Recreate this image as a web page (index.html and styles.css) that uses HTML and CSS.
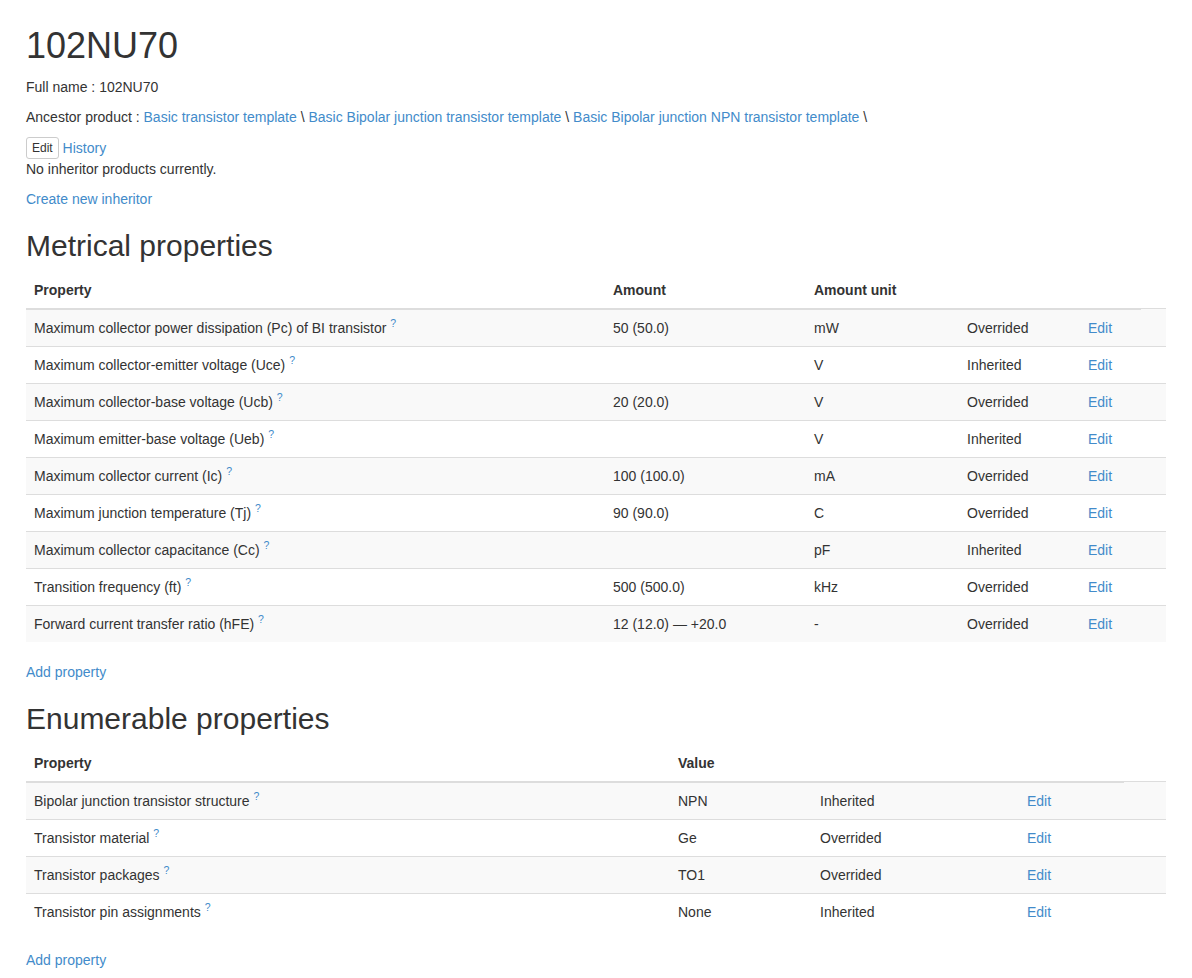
FILE: index.html
```html
<!DOCTYPE html>
<html>
<head>
<meta charset="utf-8">
<title>102NU70</title>
<link rel="stylesheet" href="styles.css">
</head>
<body>
<div class="container">
  <h1 class="title">102NU70</h1>
  <p class="line">Full name : 102NU70</p>
  <p class="line">Ancestor product : <a href="#">Basic transistor template</a> \ <a href="#">Basic Bipolar junction transistor template</a> \ <a href="#">Basic Bipolar junction NPN transistor template</a> \</p>
  <div class="actions"><button class="btn-xs">Edit</button> <a href="#">History</a></div>
  <div class="line-plain">No inheritor products currently.</div>
  <p class="line create"><a href="#">Create new inheritor</a></p>

  <h2 class="section">Metrical properties</h2>
  <table class="props">
    <colgroup>
      <col style="width:579px"><col style="width:201px"><col style="width:153px"><col style="width:121px"><col style="width:61px"><col>
    </colgroup>
    <thead>
      <tr><th>Property</th><th>Amount</th><th>Amount unit</th><th></th><th></th></tr>
    </thead>
    <tbody>
      <tr><td>Maximum collector power dissipation (Pc) of BI transistor <sup><a href="#">?</a></sup></td><td>50 (50.0)</td><td>mW</td><td>Overrided</td><td colspan="2"><a href="#">Edit</a></td></tr>
      <tr><td>Maximum collector-emitter voltage (Uce) <sup><a href="#">?</a></sup></td><td></td><td>V</td><td>Inherited</td><td colspan="2"><a href="#">Edit</a></td></tr>
      <tr><td>Maximum collector-base voltage (Ucb) <sup><a href="#">?</a></sup></td><td>20 (20.0)</td><td>V</td><td>Overrided</td><td colspan="2"><a href="#">Edit</a></td></tr>
      <tr><td>Maximum emitter-base voltage (Ueb) <sup><a href="#">?</a></sup></td><td></td><td>V</td><td>Inherited</td><td colspan="2"><a href="#">Edit</a></td></tr>
      <tr><td>Maximum collector current (Ic) <sup><a href="#">?</a></sup></td><td>100 (100.0)</td><td>mA</td><td>Overrided</td><td colspan="2"><a href="#">Edit</a></td></tr>
      <tr><td>Maximum junction temperature (Tj) <sup><a href="#">?</a></sup></td><td>90 (90.0)</td><td>C</td><td>Overrided</td><td colspan="2"><a href="#">Edit</a></td></tr>
      <tr><td>Maximum collector capacitance (Cc) <sup><a href="#">?</a></sup></td><td></td><td>pF</td><td>Inherited</td><td colspan="2"><a href="#">Edit</a></td></tr>
      <tr><td>Transition frequency (ft) <sup><a href="#">?</a></sup></td><td>500 (500.0)</td><td>kHz</td><td>Overrided</td><td colspan="2"><a href="#">Edit</a></td></tr>
      <tr><td>Forward current transfer ratio (hFE) <sup><a href="#">?</a></sup></td><td>12 (12.0) — +20.0</td><td>-</td><td>Overrided</td><td colspan="2"><a href="#">Edit</a></td></tr>
    </tbody>
  </table>
  <p class="line"><a href="#">Add property</a></p>

  <h2 class="section">Enumerable properties</h2>
  <table class="props">
    <colgroup>
      <col style="width:644px"><col style="width:142px"><col style="width:207px"><col style="width:105px"><col>
    </colgroup>
    <thead>
      <tr><th>Property</th><th>Value</th><th></th><th></th></tr>
    </thead>
    <tbody>
      <tr><td>Bipolar junction transistor structure <sup><a href="#">?</a></sup></td><td>NPN</td><td>Inherited</td><td colspan="2"><a href="#">Edit</a></td></tr>
      <tr><td>Transistor material <sup><a href="#">?</a></sup></td><td>Ge</td><td>Overrided</td><td colspan="2"><a href="#">Edit</a></td></tr>
      <tr><td>Transistor packages <sup><a href="#">?</a></sup></td><td>TO1</td><td>Overrided</td><td colspan="2"><a href="#">Edit</a></td></tr>
      <tr><td>Transistor pin assignments <sup><a href="#">?</a></sup></td><td>None</td><td>Inherited</td><td colspan="2"><a href="#">Edit</a></td></tr>
    </tbody>
  </table>
  <p class="line"><a href="#">Add property</a></p>
</div>
</body>
</html>
```

FILE: styles.css
```css
html, body {
  margin: 0;
  padding: 0;
  background: #fff;
}
body {
  font-family: "Liberation Sans", Arial, Helvetica, sans-serif;
  font-size: 14px;
  line-height: 20px;
  color: #333;
}
a {
  color: #428bca;
  text-decoration: none;
}
.container {
  padding: 0 26px;
}
.title {
  font-size: 36px;
  font-weight: 500;
  line-height: 39.6px;
  margin: 26px 0 11px;
}
.line {
  margin: 0 0 10px;
}
.line-plain {
  margin: 0;
}
.create {
  margin-top: 10px;
}
.actions {
  margin: 0;
  height: 22px;
  line-height: 22px;
}
.btn-xs {
  font-family: "Liberation Sans", Arial, Helvetica, sans-serif;
  font-size: 12px;
  line-height: 18px;
  padding: 1px 5px;
  border: 1px solid #ccc;
  border-radius: 3px;
  background: #fff;
  color: #333;
  vertical-align: top;
  margin: 0;
}
.section {
  font-size: 30px;
  font-weight: 500;
  line-height: 33px;
  margin: 20px 0 10px;
}
.props {
  width: 100%;
  table-layout: fixed;
  border-collapse: collapse;
  border-spacing: 0;
  margin-bottom: 20px;
}
.props th, .props td {
  padding: 8px;
  line-height: 20px;
  text-align: left;
  vertical-align: top;
  white-space: nowrap;
}
.props th {
  font-weight: bold;
  border-bottom: 2px solid #ddd;
}
.props td {
  border-top: 1px solid #ddd;
}
.props tbody tr:nth-child(odd) td {
  background: #f9f9f9;
}
sup {
  font-size: 75%;
  line-height: 0;
  position: relative;
  vertical-align: baseline;
  top: -0.5em;
}
```
